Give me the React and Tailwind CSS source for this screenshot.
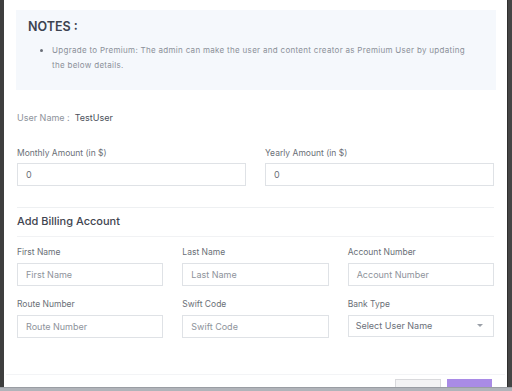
import React from 'react';

const Field = ({ label, placeholder, value, gap = 'mt-[3px]' }) => (
  <div>
    <div className="h-[14px] leading-[14px] text-[8.5px] text-[#6a6f77]">{label}</div>
    <div className={`${gap} h-[23px] border border-[#dfe2e6] flex items-center px-[8px] text-[9px]`}>
      {value !== undefined ? (
        <span className="text-[#6b7079]">{value}</span>
      ) : (
        <span className="text-[#8e939b]">{placeholder}</span>
      )}
    </div>
  </div>
);

const App = () => {
  return (
    <div
      className="w-[512px] h-[391px] overflow-hidden flex flex-col bg-[#434343]"
      style={{ fontFamily: 'Inter, "Noto Sans", sans-serif' }}
    >
      <div className="flex h-[387px]">
        <div className="w-[4px] bg-[#3e3e3e]"></div>
        <div className="w-[503px] bg-white overflow-hidden flex flex-col">
          {/* Notes */}
          <div className="pl-3 pr-[11px] pt-[10px]">
            <div className="h-[80px] bg-[#f5f8fc] pl-3 pr-6 pt-[8px]">
              <div className="text-[12.5px] font-semibold text-[#3c4350] leading-[18px]">NOTES :</div>
              <ul className="mt-[7px] pl-[24px] list-disc text-[8px] tracking-[0.3px] leading-[15px] text-[#8b9099] marker:text-[#6b7079]">
                <li>
                  Upgrade to Premium: The admin can make the user and content creator as Premium User by updating
                  the below details.
                </li>
              </ul>
            </div>
          </div>

          <div className="px-[13px]">
            <div className="mt-[21px] h-[14px] leading-[14px] text-[9px] text-[#8e939b]">
              User Name :<span className="ml-[5px] text-[#4b515b]">TestUser</span>
            </div>

            <div className="mt-[21px] grid grid-cols-2 gap-x-[19px]">
              <Field label="Monthly Amount (in $)" value="0" />
              <Field label="Yearly Amount (in $)" value="0" />
            </div>

            <div className="mt-[21px] border-t border-[#eef0f2]"></div>
            <div className="mt-[6px] h-[14px] leading-[14px] text-[11px] text-[#3f4550] font-medium">Add Billing Account</div>
            <div className="mt-[8px] border-t border-[#f1f2f4]"></div>

            <div className="mt-[8px] grid grid-cols-3 gap-x-[19px] gap-y-[11px]">
              <Field gap="mt-[4px]" label="First Name" placeholder="First Name" />
              <Field gap="mt-[4px]" label="Last Name" placeholder="Last Name" />
              <Field gap="mt-[4px]" label="Account Number" placeholder="Account Number" />
              <Field gap="mt-[4px]" label="Route Number" placeholder="Route Number" />
              <Field gap="mt-[4px]" label="Swift Code" placeholder="Swift Code" />
              <div>
                <div className="h-[14px] leading-[14px] text-[8.5px] text-[#6a6f77]">Bank Type</div>
                <div className="mt-[4px] h-[22px] border border-[#dfe2e6] flex items-center justify-between pl-[7px] pr-[10px] text-[9px] text-[#6b7079]">
                  <span>Select User Name</span>
                  <svg width="6" height="4" viewBox="0 0 6 4">
                    <path d="M0 0 L6 0 L3 3 Z" fill="#9a9fa7" />
                  </svg>
                </div>
              </div>
            </div>
          </div>

          <div className="mt-[36px] border-t border-[#f3f4f6] mx-[2px]"></div>
          <div className="flex justify-end gap-[6px] pr-[15px] pt-[4px] shrink-0">
            <button className="w-[46px] h-[24px] shrink-0 bg-[#f3f3f4] border border-[#d9d9dc] text-[8px] text-[#555] pt-[10px]">
              Cancel
            </button>
            <button className="w-[45px] h-[24px] shrink-0 bg-[#a98be6] text-[8px] text-white pt-[10px]">Submit</button>
          </div>
        </div>
        <div className="flex-1 bg-[#454545] border-l border-[#2f2f2f]"></div>
      </div>
      <div className="h-[4px] bg-[#b1b4ba] border-t border-[#9a9da3]"></div>
    </div>
  );
};

export default App;
